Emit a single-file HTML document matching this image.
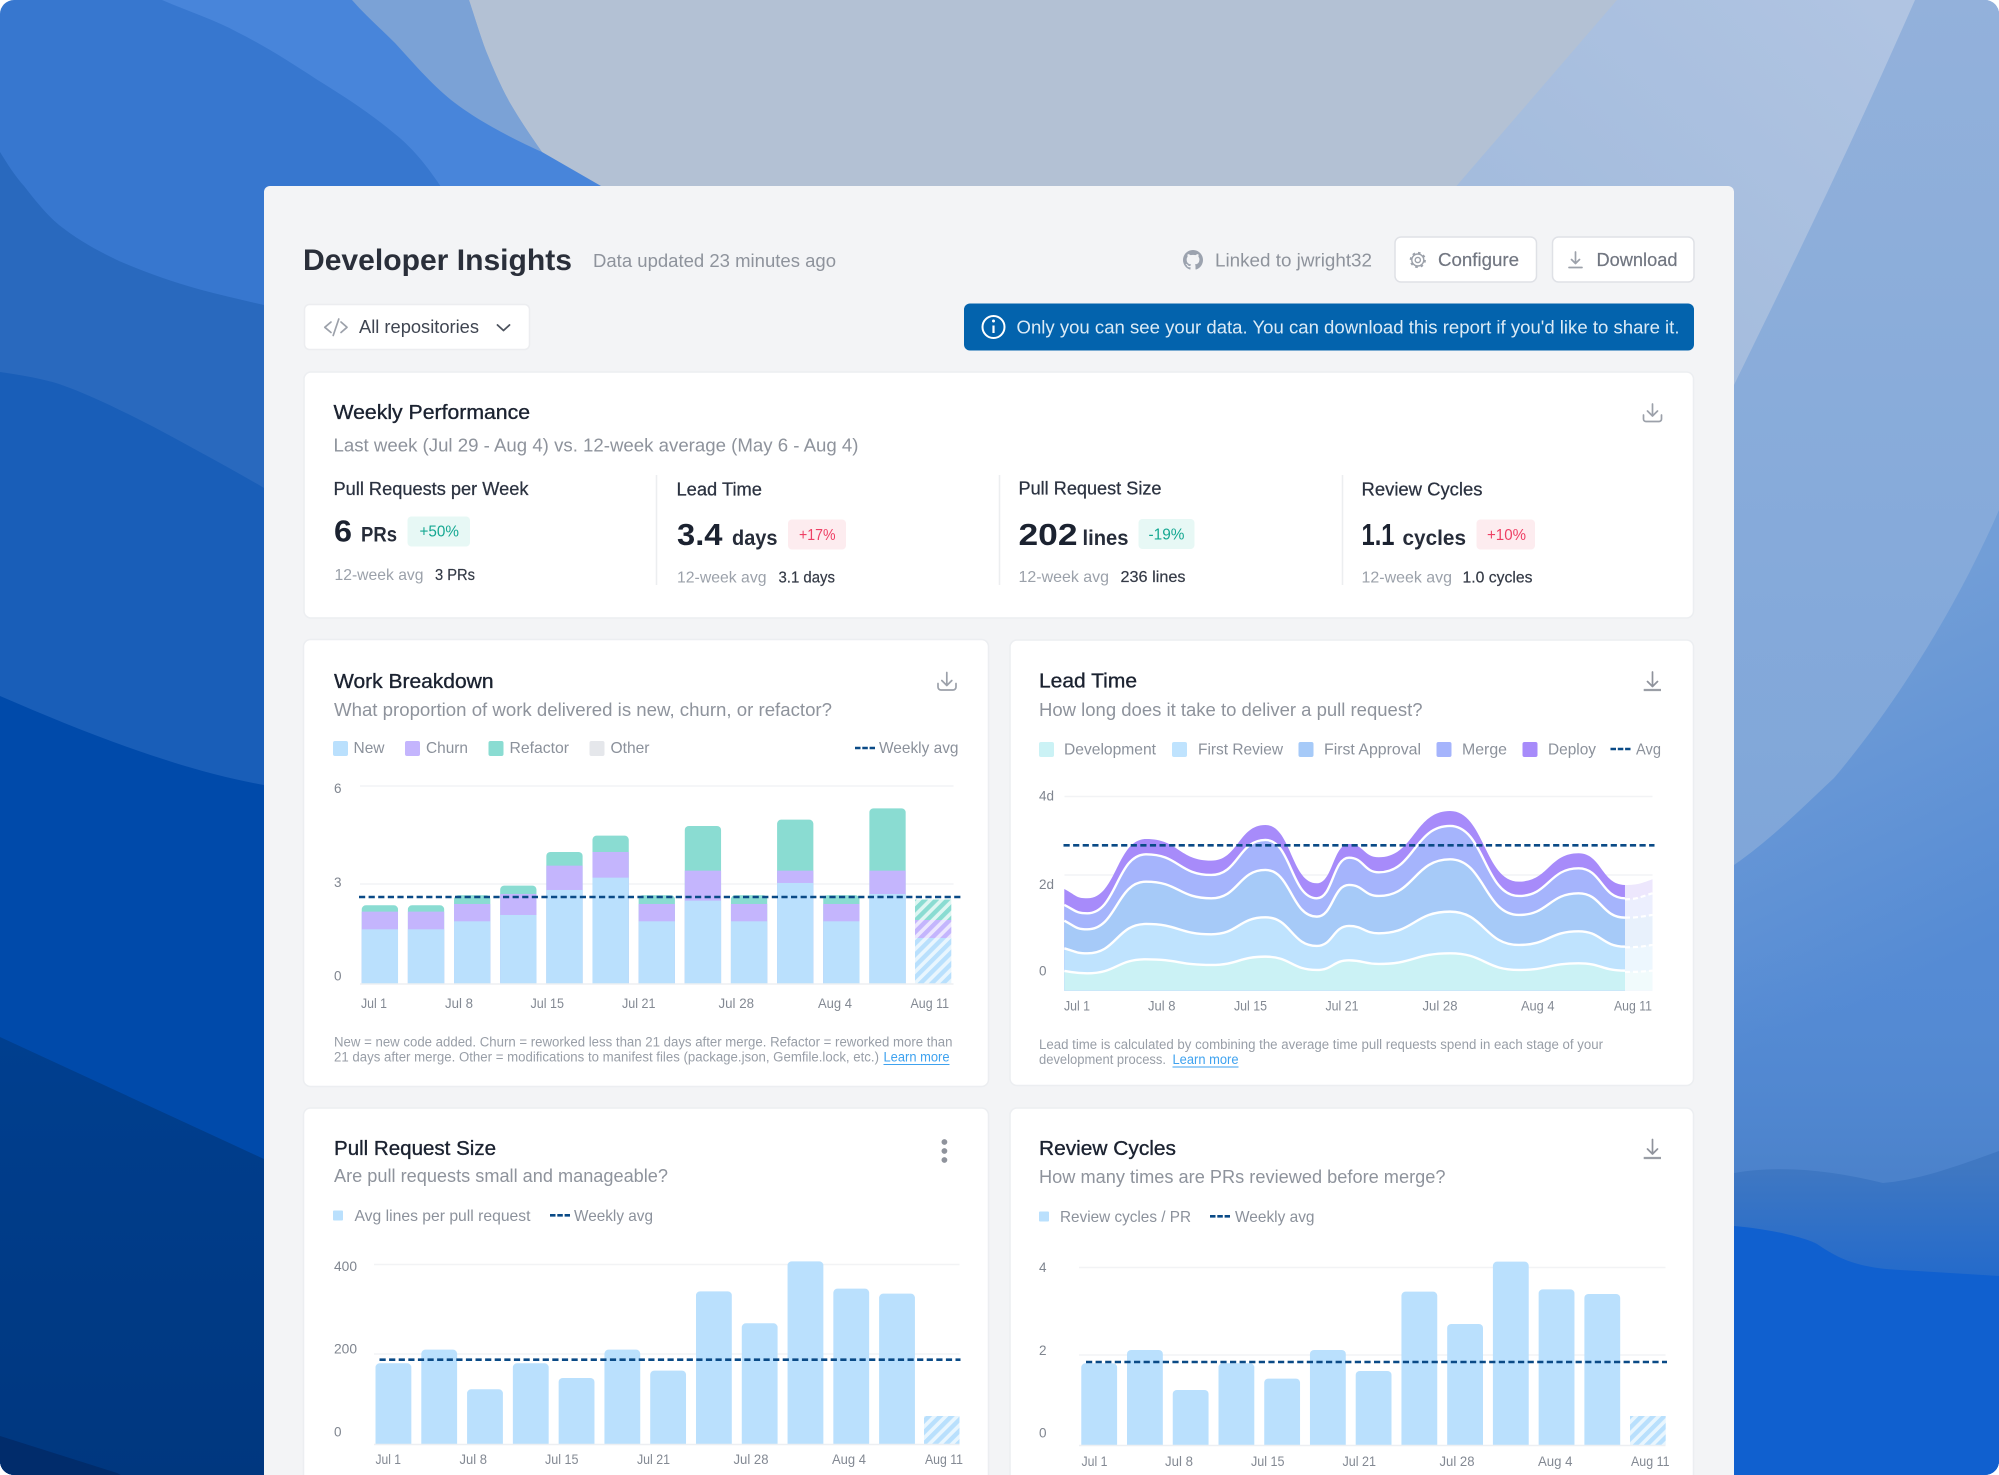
<!DOCTYPE html>
<html lang="en"><head><meta charset="utf-8"><title>Developer Insights</title>
<style>
html,body{margin:0;padding:0;background:#fff;width:1999px;height:1475px;overflow:hidden}
svg{display:block}
text{font-family:"Liberation Sans",sans-serif}
.h1{font-size:30px;font-weight:700;fill:#2a2f3a}
.h2{font-size:20.5px;fill:#1b2230;stroke:#1b2230;stroke-width:.35}
.sub{font-size:18px;fill:#8e939c}
.m{font-size:18px;fill:#2b3240;stroke:#2b3240;stroke-width:.25}
.big{font-size:31px;font-weight:700;fill:#1b2230}
.unit{font-size:21px;font-weight:700;fill:#262c39}
.avg{font-size:16px;fill:#9ba1aa}
.val{font-size:16px;fill:#343a46;stroke:#343a46;stroke-width:.2}
.lg{font-size:16px;fill:#8b919b}
.tk{font-size:13.5px;fill:#838993}
.ax{font-size:13.5px;fill:#7f858f}
.fn{font-size:13.5px;fill:#989ea7}
.lnk{font-size:13.5px;fill:#3ea2ef}
.btn{font-size:18px;fill:#717681;stroke:#717681;stroke-width:.2}
.ic{fill:none;stroke:#9ca1aa;stroke-width:1.7;stroke-linecap:round;stroke-linejoin:round}
.dash{fill:none;stroke:#0a4a86;stroke-width:2.6;stroke-dasharray:6.2 3.4}
.grid{stroke:#f2f3f5;stroke-width:1.5}
.axis{stroke:#edeff2;stroke-width:1.5}
.card{fill:#fff;stroke:#eceef1;stroke-width:1.5}
.w{fill:none;stroke:#fff;stroke-width:2.4;vector-effect:non-scaling-stroke}
.wd{fill:none;stroke:#fff;stroke-width:2.2;stroke-dasharray:5 3;vector-effect:non-scaling-stroke}
</style></head><body>
<svg xmlns="http://www.w3.org/2000/svg" width="1999" height="1475" viewBox="0 0 1999 1475">
<defs>
<clipPath id="round"><rect width="1999" height="1475" rx="14" ry="14"/></clipPath>
<clipPath id="c1"><rect x="0" y="0" width="1568" height="1091"/></clipPath>
<clipPath id="c3"><rect x="0" y="0" width="1568" height="1032"/></clipPath>
<clipPath id="c4"><rect x="0" y="0" width="1568" height="1035"/></clipPath>
<linearGradient id="rt" x1="0" y1="0" x2="0" y2="870" gradientUnits="userSpaceOnUse"><stop offset="0" stop-color="#93B1DB"/><stop offset=".45" stop-color="#89ACDA"/><stop offset="1" stop-color="#7FA6D9"/></linearGradient>
<linearGradient id="rb" x1="1800" y1="640" x2="1950" y2="960" gradientUnits="userSpaceOnUse"><stop offset="0" stop-color="#729ED7"/><stop offset="1" stop-color="#558BD4"/></linearGradient>
<linearGradient id="rb2" x1="0" y1="950" x2="0" y2="1175" gradientUnits="userSpaceOnUse"><stop offset="0" stop-color="#558BD4" stop-opacity="0"/><stop offset="1" stop-color="#4B82CB"/></linearGradient>
<linearGradient id="rl" x1="1880" y1="0" x2="1560" y2="380" gradientUnits="userSpaceOnUse"><stop offset="0" stop-color="#B0C4E2"/><stop offset="1" stop-color="#A1BADC"/></linearGradient>
<linearGradient id="rband" x1="0" y1="1165" x2="0" y2="1280" gradientUnits="userSpaceOnUse"><stop offset="0" stop-color="#4078C2"/><stop offset="1" stop-color="#236ACB"/></linearGradient>
<linearGradient id="ld" x1="0" y1="1040" x2="0" y2="1475" gradientUnits="userSpaceOnUse"><stop offset="0" stop-color="#003F8F"/><stop offset="1" stop-color="#00377F"/></linearGradient>
<pattern id="hb" width="8" height="8" patternUnits="userSpaceOnUse" patternTransform="rotate(45)"><rect width="8" height="8" fill="#e9f6fe"/><rect width="4.4" height="8" fill="#b9e0fd"/></pattern>
<pattern id="hp" width="8" height="8" patternUnits="userSpaceOnUse" patternTransform="rotate(45)"><rect width="8" height="8" fill="#ece7fe"/><rect width="4.4" height="8" fill="#c4b5fd"/></pattern>
<pattern id="ht" width="8" height="8" patternUnits="userSpaceOnUse" patternTransform="rotate(45)"><rect width="8" height="8" fill="#dff6f2"/><rect width="4.4" height="8" fill="#8adcd2"/></pattern>
</defs>

<!-- background -->
<g clip-path="url(#round)">
<rect width="1000" height="1480" fill="#3777CF"/>
<rect x="1000" width="999" height="1480" fill="url(#rb)"/>
<rect x="1000" y="950" width="999" height="530" fill="url(#rb2)"/>
<path d="M162 0C190 12 215 20 237 32C265 46 290 62 316 79C345 97 370 113 395 134C415 150 430 170 443 190L700 190L700 0Z" fill="#4885DA"/>
<path d="M352 0C365 15 380 28 395 43C415 65 435 88 455 103C480 122 515 140 542 152C530 135 520 120 510 103C500 85 493 68 486 51C480 35 474 15 469 0Z" fill="#7BA2D6"/>
<path d="M0 152C8 165 15 176 24 186C35 200 45 213 59 225C78 240 98 251 119 261C145 272 170 281 198 289C220 295 242 300 264 305V1480H0Z" fill="#2969BE"/>
<path d="M0 372C20 375 40 378 59 384C85 393 112 406 138 419C158 429 178 440 198 451C220 463 242 475 264 488V1480H0Z" fill="#195EB8"/>
<path d="M0 696C90 735 180 770 264 785V1480H0Z" fill="#004AAA"/>
<path d="M0 1037L264 1159V1480H0Z" fill="url(#ld)"/>
<path d="M0 1436L117 1473L130 1480H0Z" fill="#012C6B"/>
<path d="M1400 0H1999V510C1960 600 1900 700 1834 778C1800 810 1770 840 1734 865H1400Z" fill="url(#rt)"/>
<path d="M1400 0H1915C1840 170 1790 270 1733 387L1734 190H1400Z" fill="url(#rl)"/>
<path d="M469 0C474 15 480 35 486 51C493 68 500 85 510 103C520 120 530 135 542 152L601 186V190H1453L1617 0Z" fill="#B3C1D4"/>
<path d="M1734 1173C1780 1165 1830 1170 1883 1183C1920 1180 1960 1165 1999 1151V1480H1734Z" fill="url(#rband)"/>
<path d="M1734 1226C1780 1230 1810 1240 1817 1244C1840 1260 1860 1268 1900 1270L1999 1276V1480H1734Z" fill="#1060CF"/>
</g>

<!-- panel -->
<path d="M264 1480V192a6 6 0 0 1 6-6H1728a6 6 0 0 1 6 6V1480Z" fill="#F3F4F6"/>

<!-- header -->
<text class="h1" x="303" y="270" textLength="269" lengthAdjust="spacingAndGlyphs">Developer Insights</text>
<text class="sub" x="593" y="267" textLength="243" lengthAdjust="spacingAndGlyphs">Data updated 23 minutes ago</text>
<path transform="translate(1183 250) scale(1.25)" fill="#9ca3af" d="M8 0C3.58 0 0 3.58 0 8c0 3.54 2.29 6.53 5.47 7.59.4.07.55-.17.55-.38 0-.19-.01-.82-.01-1.49-2.01.37-2.53-.49-2.69-.94-.09-.23-.48-.94-.82-1.13-.28-.15-.68-.52-.01-.53.63-.01 1.08.58 1.23.82.72 1.21 1.87.87 2.33.66.07-.52.28-.87.51-1.07-1.78-.2-3.64-.89-3.64-3.95 0-.87.31-1.59.82-2.15-.08-.2-.36-1.02.08-2.12 0 0 .67-.21 2.2.82.64-.18 1.32-.27 2-.27.68 0 1.36.09 2 .27 1.53-1.04 2.2-.82 2.2-.82.44 1.1.16 1.92.08 2.12.51.56.82 1.27.82 2.15 0 3.07-1.87 3.75-3.65 3.95.29.25.54.73.54 1.48 0 1.07-.01 1.93-.01 2.2 0 .21.15.46.55.38A8.013 8.013 0 0016 8c0-4.42-3.58-8-8-8z"/>
<text class="sub" x="1215" y="266.5" textLength="157" lengthAdjust="spacingAndGlyphs">Linked to jwright32</text>
<rect x="1395" y="237" width="141.5" height="45" rx="6" fill="#fff" stroke="#dfe1e6" stroke-width="1.5"/>
<g class="ic" style="stroke-width:1.4"><circle cx="1417.8" cy="260" r="2.6"/><circle cx="1417.8" cy="260" r="6"/></g>
<circle cx="1417.8" cy="260" r="7.2" fill="none" stroke="#9ca1aa" stroke-width="1.8" stroke-dasharray="2.6 3.05"/>
<text class="btn" x="1438" y="266" textLength="81" lengthAdjust="spacingAndGlyphs">Configure</text>
<rect x="1552.5" y="237" width="141.5" height="45" rx="6" fill="#fff" stroke="#dfe1e6" stroke-width="1.5"/>
<path class="ic" d="M1575.5 252V263M1571.5 259.5L1575.5 263.5L1579.5 259.5M1569 267.5H1582"/>
<text class="btn" x="1596.5" y="266" textLength="81" lengthAdjust="spacingAndGlyphs">Download</text>

<rect x="304.5" y="304.5" width="225" height="45" rx="5" fill="#fff" stroke="#ecedf0" stroke-width="1.5"/>
<path class="ic" d="M331 322L324.8 327.3L331 332.5M341 322L347 327.3L341 332.5M338.8 319L333.2 335.5"/>
<text x="359" y="333" font-size="18" fill="#3f4551" textLength="120" lengthAdjust="spacingAndGlyphs">All repositories</text>
<path d="M497.5 325L503.5 330.5L509.5 325" fill="none" stroke="#4d535e" stroke-width="1.8" stroke-linecap="round" stroke-linejoin="round"/>

<rect x="964" y="303.5" width="730" height="47" rx="6" fill="#0363AD"/>
<circle cx="993.5" cy="327" r="11" fill="none" stroke="#fff" stroke-width="2"/>
<circle cx="993.5" cy="321" r="1.5" fill="#fff"/>
<path d="M993.5 325.5V333" stroke="#fff" stroke-width="2.2"/>
<text x="1016.5" y="333.5" font-size="18" fill="#dcebf6" textLength="663" lengthAdjust="spacingAndGlyphs">Only you can see your data. You can download this report if you'd like to share it.</text>

<!-- weekly performance -->
<rect class="card" x="304" y="372" width="1389.5" height="246" rx="7"/>
<text class="h2" x="333.5" y="419" textLength="196.5" lengthAdjust="spacingAndGlyphs">Weekly Performance</text>
<text class="sub" x="333.5" y="451.5" textLength="525" lengthAdjust="spacingAndGlyphs">Last week (Jul 29 - Aug 4) vs. 12-week average (May 6 - Aug 4)</text>
<path class="ic" d="M1652.5 404V415.5M1647.5 411L1652.5 416L1657.5 411M1643.5 415V419a2.5 2.5 0 0 0 2.5 2.5H1659a2.5 2.5 0 0 0 2.5-2.5V415"/>

<text class="m" x="333.5" y="495" textLength="195" lengthAdjust="spacingAndGlyphs">Pull Requests per Week</text>
<text class="big" x="334" y="541.5" textLength="18" lengthAdjust="spacingAndGlyphs">6</text>
<text class="unit" x="361" y="541.5" textLength="36" lengthAdjust="spacingAndGlyphs">PRs</text>
<rect x="407.5" y="516.5" width="62.5" height="30" rx="4" fill="#E7F8F5"/>
<text x="419.5" y="536.5" font-size="16" fill="#15a892" textLength="39.5" lengthAdjust="spacingAndGlyphs">+50%</text>
<text class="avg" x="334.5" y="580" textLength="89" lengthAdjust="spacingAndGlyphs">12-week avg</text>
<text class="val" x="435" y="580" textLength="40" lengthAdjust="spacingAndGlyphs">3 PRs</text>
<path d="M656.5 475V585M999.5 475V585M1342.5 475V585" stroke="#eceef0" stroke-width="1.5"/>

<text class="m" x="676.5" y="495.5" textLength="85.5" lengthAdjust="spacingAndGlyphs">Lead Time</text>
<text class="big" x="677" y="545" textLength="45.5" lengthAdjust="spacingAndGlyphs">3.4</text>
<text class="unit" x="732" y="545" textLength="45.5" lengthAdjust="spacingAndGlyphs">days</text>
<rect x="788" y="519.5" width="58" height="30" rx="4" fill="#FDECEF"/>
<text x="799" y="540" font-size="16" fill="#ee3f64" textLength="36.5" lengthAdjust="spacingAndGlyphs">+17%</text>
<text class="avg" x="677" y="582.5" textLength="89.5" lengthAdjust="spacingAndGlyphs">12-week avg</text>
<text class="val" x="778.5" y="582.5" textLength="56.5" lengthAdjust="spacingAndGlyphs">3.1 days</text>

<text class="m" x="1018.5" y="494.5" textLength="143" lengthAdjust="spacingAndGlyphs">Pull Request Size</text>
<text class="big" x="1018.5" y="545" textLength="59" lengthAdjust="spacingAndGlyphs">202</text>
<text class="unit" x="1082.5" y="545" textLength="46" lengthAdjust="spacingAndGlyphs">lines</text>
<rect x="1138.5" y="519" width="56" height="30" rx="4" fill="#E7F8F5"/>
<text x="1148.5" y="539.5" font-size="16" fill="#15a892" textLength="36" lengthAdjust="spacingAndGlyphs">-19%</text>
<text class="avg" x="1018.5" y="582" textLength="90.5" lengthAdjust="spacingAndGlyphs">12-week avg</text>
<text class="val" x="1120.5" y="582" textLength="65" lengthAdjust="spacingAndGlyphs">236 lines</text>

<text class="m" x="1361.5" y="495.5" textLength="121" lengthAdjust="spacingAndGlyphs">Review Cycles</text>
<text class="big" x="1361.5" y="545" textLength="33" lengthAdjust="spacingAndGlyphs">1.1</text>
<text class="unit" x="1402.5" y="545" textLength="63.5" lengthAdjust="spacingAndGlyphs">cycles</text>
<rect x="1476.5" y="519.5" width="58.5" height="30" rx="4" fill="#FDECEF"/>
<text x="1487" y="540" font-size="16" fill="#ee3f64" textLength="39" lengthAdjust="spacingAndGlyphs">+10%</text>
<text class="avg" x="1361.5" y="582.5" textLength="90.5" lengthAdjust="spacingAndGlyphs">12-week avg</text>
<text class="val" x="1462.5" y="582.5" textLength="70" lengthAdjust="spacingAndGlyphs">1.0 cycles</text>

<!-- work breakdown -->
<rect class="card" x="303.5" y="639.5" width="685" height="447" rx="7"/>
<text class="h2" x="334" y="688" textLength="159.5" lengthAdjust="spacingAndGlyphs">Work Breakdown</text>
<text class="sub" x="334" y="716" textLength="498" lengthAdjust="spacingAndGlyphs">What proportion of work delivered is new, churn, or refactor?</text>
<path class="ic" d="M946.8 672.5V685M941.8 680.5L946.8 685.5L951.8 680.5M938 683.5V687a3 3 0 0 0 3 3H953a3 3 0 0 0 3-3V683.5"/>
<rect x="333" y="741" width="15" height="15" rx="2" fill="#BAE0FD"/><text class="lg" x="353.5" y="753" textLength="31" lengthAdjust="spacingAndGlyphs">New</text>
<rect x="405" y="741" width="15" height="15" rx="2" fill="#C4B5FD"/><text class="lg" x="426" y="753" textLength="42" lengthAdjust="spacingAndGlyphs">Churn</text>
<rect x="488.5" y="741" width="15" height="15" rx="2" fill="#8ADCD2"/><text class="lg" x="509.5" y="753" textLength="59.5" lengthAdjust="spacingAndGlyphs">Refactor</text>
<rect x="589.5" y="741" width="15" height="15" rx="2" fill="#E5E7EB"/><text class="lg" x="610.5" y="753" textLength="39" lengthAdjust="spacingAndGlyphs">Other</text>
<path class="dash" d="M855 748H875" style="stroke-dasharray:5.5 1.8"/>
<text class="lg" x="879" y="753" textLength="79.5" lengthAdjust="spacingAndGlyphs">Weekly avg</text>
<path class="grid" d="M360 786H953.5M360 884H953.5"/>
<text class="ax" x="334" y="793">6</text><text class="ax" x="334" y="887">3</text><text class="ax" x="334" y="980.5">0</text>
<g transform="translate(280 620) scale(.4592 .3333)" clip-path="url(#c1)">
<g fill="#8ADCD2">
<rect x="178" y="856" width="79" height="300" rx="9" ry="12"/><rect x="278.5" y="856" width="79" height="300" rx="9" ry="12"/><rect x="379" y="826" width="79" height="300" rx="9" ry="12"/><rect x="479.5" y="797" width="79" height="300" rx="9" ry="12"/><rect x="580" y="696" width="79" height="500" rx="9" ry="12"/><rect x="680.5" y="647" width="79" height="500" rx="9" ry="12"/><rect x="781" y="826" width="79" height="300" rx="9" ry="12"/><rect x="881.5" y="618" width="79" height="500" rx="9" ry="12"/><rect x="982" y="826" width="79" height="300" rx="9" ry="12"/><rect x="1082.5" y="599" width="79" height="520" rx="9" ry="12"/><rect x="1183" y="826" width="79" height="300" rx="9" ry="12"/><rect x="1283.5" y="565" width="79" height="540" rx="9" ry="12"/>
</g>
<g fill="#C4B5FD">
<rect x="178" y="875" width="79" height="220"/><rect x="278.5" y="875" width="79" height="220"/><rect x="379" y="852" width="79" height="240"/><rect x="479.5" y="822" width="79" height="270"/><rect x="580" y="737" width="79" height="360"/><rect x="680.5" y="696" width="79" height="400"/><rect x="781" y="852" width="79" height="240"/><rect x="881.5" y="752" width="79" height="340"/><rect x="982" y="852" width="79" height="240"/><rect x="1082.5" y="752" width="79" height="340"/><rect x="1183" y="852" width="79" height="240"/><rect x="1283.5" y="752" width="79" height="340"/>
</g>
<g fill="#BAE0FD">
<rect x="178" y="928" width="79" height="165"/><rect x="278.5" y="928" width="79" height="165"/><rect x="379" y="904" width="79" height="190"/><rect x="479.5" y="885" width="79" height="210"/><rect x="580" y="810" width="79" height="285"/><rect x="680.5" y="773" width="79" height="320"/><rect x="781" y="904" width="79" height="190"/><rect x="881.5" y="842" width="79" height="250"/><rect x="982" y="904" width="79" height="190"/><rect x="1082.5" y="789" width="79" height="305"/><rect x="1183" y="904" width="79" height="190"/><rect x="1283.5" y="822" width="79" height="270"/>
</g>
</g>
<rect x="915" y="899.5" width="36.3" height="20.5" fill="url(#ht)"/>
<rect x="915" y="920" width="36.3" height="18" fill="url(#hp)"/>
<rect x="915" y="938" width="36.3" height="46" fill="url(#hb)"/>
<path class="axis" d="M360 984H953.5"/>
<path class="dash" d="M359 897H960.5"/>
<g class="tk">
<text x="361" y="1008" textLength="26" lengthAdjust="spacingAndGlyphs">Jul 1</text><text x="445" y="1008" textLength="28" lengthAdjust="spacingAndGlyphs">Jul 8</text><text x="530.5" y="1008" textLength="33.5" lengthAdjust="spacingAndGlyphs">Jul 15</text><text x="622" y="1008" textLength="33.5" lengthAdjust="spacingAndGlyphs">Jul 21</text><text x="718.5" y="1008" textLength="35.5" lengthAdjust="spacingAndGlyphs">Jul 28</text><text x="818" y="1008" textLength="34" lengthAdjust="spacingAndGlyphs">Aug 4</text><text x="910.5" y="1008" textLength="38.5" lengthAdjust="spacingAndGlyphs">Aug 11</text>
</g>
<text class="fn" x="334" y="1046.5" textLength="618.5" lengthAdjust="spacingAndGlyphs">New = new code added. Churn = reworked less than 21 days after merge. Refactor = reworked more than</text>
<text class="fn" x="334" y="1061.5" textLength="545" lengthAdjust="spacingAndGlyphs">21 days after merge. Other = modifications to manifest files (package.json, Gemfile.lock, etc.)</text>
<text class="lnk" x="883.5" y="1061.5" textLength="66" lengthAdjust="spacingAndGlyphs">Learn more</text>
<path d="M883.5 1064.5H949.5" stroke="#3ea2ef" stroke-width="1"/>

<!-- lead time -->
<rect class="card" x="1010" y="640" width="683.5" height="445.5" rx="7"/>
<text class="h2" x="1039" y="687.5" textLength="98" lengthAdjust="spacingAndGlyphs">Lead Time</text>
<text class="sub" x="1039" y="716" textLength="383.5" lengthAdjust="spacingAndGlyphs">How long does it take to deliver a pull request?</text>
<path class="ic" d="M1652.5 672V686.5M1647.5 681.5L1652.5 686.5L1657.5 681.5" style="stroke:#8f939c"/>
<path d="M1643.7 690H1661" stroke="#9a9ea6" stroke-width="2.2"/>
<rect x="1039" y="742" width="15" height="15" rx="2" fill="#CBF2F5"/><text class="lg" x="1064" y="754.5" textLength="92" lengthAdjust="spacingAndGlyphs">Development</text>
<rect x="1172" y="742" width="15" height="15" rx="2" fill="#BFE3FE"/><text class="lg" x="1198" y="754.5" textLength="85" lengthAdjust="spacingAndGlyphs">First Review</text>
<rect x="1298.5" y="742" width="15" height="15" rx="2" fill="#A6CAF8"/><text class="lg" x="1324" y="754.5" textLength="97" lengthAdjust="spacingAndGlyphs">First Approval</text>
<rect x="1436.5" y="742" width="15" height="15" rx="2" fill="#A5B4FC"/><text class="lg" x="1462" y="754.5" textLength="45" lengthAdjust="spacingAndGlyphs">Merge</text>
<rect x="1522.5" y="742" width="15" height="15" rx="2" fill="#A78BFA"/><text class="lg" x="1548" y="754.5" textLength="48" lengthAdjust="spacingAndGlyphs">Deploy</text>
<path class="dash" d="M1610.5 749H1630.5" style="stroke-dasharray:5.5 1.8"/>
<text class="lg" x="1636" y="754.5" textLength="25" lengthAdjust="spacingAndGlyphs">Avg</text>
<path class="grid" d="M1064.5 796.5H1652.5M1064.5 875H1652.5"/>
<text class="ax" x="1039" y="800.5" textLength="15" lengthAdjust="spacingAndGlyphs">4d</text><text class="ax" x="1039" y="889" textLength="15" lengthAdjust="spacingAndGlyphs">2d</text><text class="ax" x="1039" y="975.5">0</text>
<g transform="translate(1000 620) scale(.4592 .3333)">
<path fill="#EDE7FD" d="M1361 795C1390 795 1395 790 1421 778V1112H1361Z"/>
<path fill="#ECEFFE" d="M1361 838C1390 838 1395 830 1421 820V1112H1361Z"/>
<path fill="#E8F1FC" d="M1361 893C1390 893 1395 890 1421 885V1112H1361Z"/>
<path fill="#EDF7FE" d="M1361 982C1390 982 1395 980 1421 975V1112H1361Z"/>
<path fill="#F1FBFC" d="M1361 1056C1390 1056 1395 1055 1421 1052V1112H1361Z"/>
<path class="wd" d="M1361 838C1390 838 1395 830 1421 820M1361 893C1390 893 1395 890 1421 885M1361 982C1390 982 1395 980 1421 975M1361 1056C1390 1056 1395 1055 1421 1052"/>
<path fill="#A78BFA" d="M140 807C165 825 165 835 190 835C254 835 254 657 318 657C389 657 389 722 460 722C519 722 519 615 578 615C634 615 634 790 690 790C725 790 725 672 760 672C792 672 792 712 825 712C902 712 902 573 980 573C1055 573 1055 785 1130 785C1195 785 1195 700 1260 700C1310 700 1310 795 1361 795V1112H140Z"/>
<path fill="#A5B4FC" d="M140 855C165 872 165 880 190 880C254 880 254 703 318 703C389 703 389 765 460 765C519 765 519 660 578 660C634 660 634 835 690 835C725 835 725 713 760 713C792 713 792 757 825 757C902 757 902 618 980 618C1055 618 1055 828 1130 828C1195 828 1195 745 1260 745C1310 745 1310 835 1361 835V1112H140Z"/>
<path fill="#A6CAF8" d="M140 902C165 920 165 928 190 928C254 928 254 785 318 785C389 785 389 835 460 835C519 835 519 750 578 750C634 750 634 890 690 890C725 890 725 795 760 795C792 795 792 828 825 828C902 828 902 718 980 718C1055 718 1055 885 1130 885C1195 885 1195 820 1260 820C1310 820 1310 893 1361 893V1112H140Z"/>
<path fill="#BFE3FE" d="M140 985C165 995 165 1000 190 1000C254 1000 254 912 318 912C389 912 389 943 460 943C519 943 519 892 578 892C634 892 634 978 690 978C725 978 725 918 760 918C792 918 792 940 825 940C902 940 902 875 980 875C1055 875 1055 975 1130 975C1195 975 1195 934 1260 934C1310 934 1310 980 1361 980V1112H140Z"/>
<path fill="#CBF2F5" d="M140 1053C165 1058 165 1060 190 1060C254 1060 254 1018 318 1018C389 1018 389 1035 460 1035C519 1035 519 1010 578 1010C634 1010 634 1050 690 1050C725 1050 725 1021 760 1021C792 1021 792 1032 825 1032C902 1032 902 1000 980 1000C1055 1000 1055 1050 1130 1050C1195 1050 1195 1030 1260 1030C1310 1030 1310 1052 1361 1052V1112H140Z"/>
<path class="w" d="M140 855C165 872 165 880 190 880C254 880 254 703 318 703C389 703 389 765 460 765C519 765 519 660 578 660C634 660 634 835 690 835C725 835 725 713 760 713C792 713 792 757 825 757C902 757 902 618 980 618C1055 618 1055 828 1130 828C1195 828 1195 745 1260 745C1310 745 1310 835 1361 835"/>
<path class="w" d="M140 902C165 920 165 928 190 928C254 928 254 785 318 785C389 785 389 835 460 835C519 835 519 750 578 750C634 750 634 890 690 890C725 890 725 795 760 795C792 795 792 828 825 828C902 828 902 718 980 718C1055 718 1055 885 1130 885C1195 885 1195 820 1260 820C1310 820 1310 893 1361 893"/>
<path class="w" d="M140 985C165 995 165 1000 190 1000C254 1000 254 912 318 912C389 912 389 943 460 943C519 943 519 892 578 892C634 892 634 978 690 978C725 978 725 918 760 918C792 918 792 940 825 940C902 940 902 875 980 875C1055 875 1055 975 1130 975C1195 975 1195 934 1260 934C1310 934 1310 980 1361 980"/>
<path class="w" d="M140 1053C165 1058 165 1060 190 1060C254 1060 254 1018 318 1018C389 1018 389 1035 460 1035C519 1035 519 1010 578 1010C634 1010 634 1050 690 1050C725 1050 725 1021 760 1021C792 1021 792 1032 825 1032C902 1032 902 1000 980 1000C1055 1000 1055 1050 1130 1050C1195 1050 1195 1030 1260 1030C1310 1030 1310 1052 1361 1052"/>
</g>
<path class="dash" d="M1063.5 845.3H1654.5"/>
<g class="tk">
<text x="1064" y="1010.5" textLength="26" lengthAdjust="spacingAndGlyphs">Jul 1</text><text x="1148" y="1010.5" textLength="27.5" lengthAdjust="spacingAndGlyphs">Jul 8</text><text x="1234" y="1010.5" textLength="33" lengthAdjust="spacingAndGlyphs">Jul 15</text><text x="1325.5" y="1010.5" textLength="33" lengthAdjust="spacingAndGlyphs">Jul 21</text><text x="1422.5" y="1010.5" textLength="35" lengthAdjust="spacingAndGlyphs">Jul 28</text><text x="1521" y="1010.5" textLength="33.5" lengthAdjust="spacingAndGlyphs">Aug 4</text><text x="1614" y="1010.5" textLength="38" lengthAdjust="spacingAndGlyphs">Aug 11</text>
</g>
<text class="fn" x="1039" y="1049" textLength="564" lengthAdjust="spacingAndGlyphs">Lead time is calculated by combining the average time pull requests spend in each stage of your</text>
<text class="fn" x="1039" y="1064" textLength="127" lengthAdjust="spacingAndGlyphs">development process.</text>
<text class="lnk" x="1172.5" y="1064" textLength="66" lengthAdjust="spacingAndGlyphs">Learn more</text>
<path d="M1172.5 1067H1238.5" stroke="#3ea2ef" stroke-width="1"/>

<!-- pull request size -->
<path class="card" d="M303.5 1480V1115a7 7 0 0 1 7-7H981.5a7 7 0 0 1 7 7V1480"/>
<text class="h2" x="334" y="1155" textLength="162" lengthAdjust="spacingAndGlyphs">Pull Request Size</text>
<text class="sub" x="334" y="1182" textLength="334" lengthAdjust="spacingAndGlyphs">Are pull requests small and manageable?</text>
<circle cx="944.4" cy="1142" r="2.9" fill="#8f939c"/><circle cx="944.4" cy="1151" r="2.9" fill="#8f939c"/><circle cx="944.4" cy="1160" r="2.9" fill="#8f939c"/>
<rect x="333" y="1210.5" width="10" height="10" rx="1" fill="#BAE0FD"/>
<text class="lg" x="354.5" y="1221" textLength="176" lengthAdjust="spacingAndGlyphs">Avg lines per pull request</text>
<path class="dash" d="M550 1215.3H570" style="stroke-dasharray:5.5 1.8"/>
<text class="lg" x="574" y="1221" textLength="79" lengthAdjust="spacingAndGlyphs">Weekly avg</text>
<path class="grid" d="M374 1264.5H959.5M374 1354H959.5"/>
<text class="ax" x="334" y="1271" textLength="23" lengthAdjust="spacingAndGlyphs">400</text><text class="ax" x="334" y="1353.5" textLength="23" lengthAdjust="spacingAndGlyphs">200</text><text class="ax" x="334" y="1436.5">0</text>
<g transform="translate(280 1100) scale(.4592 .3333)" clip-path="url(#c3)" fill="#BAE0FD">
<rect x="208" y="790" width="78" height="300" rx="9" ry="12"/><rect x="307.7" y="749" width="78" height="340" rx="9" ry="12"/><rect x="407.4" y="868" width="78" height="220" rx="9" ry="12"/><rect x="507.1" y="790" width="78" height="300" rx="9" ry="12"/><rect x="606.8" y="834" width="78" height="250" rx="9" ry="12"/><rect x="706.5" y="749" width="78" height="340" rx="9" ry="12"/><rect x="806.2" y="812" width="78" height="280" rx="9" ry="12"/><rect x="905.9" y="574" width="78" height="500" rx="9" ry="12"/><rect x="1005.6" y="670" width="78" height="400" rx="9" ry="12"/><rect x="1105.3" y="484" width="78" height="600" rx="9" ry="12"/><rect x="1205" y="566" width="78" height="500" rx="9" ry="12"/><rect x="1304.7" y="581" width="78" height="500" rx="9" ry="12"/>
</g>
<rect x="924" y="1416" width="35.5" height="28" fill="url(#hb)"/>
<path class="axis" d="M374 1444.5H959.5"/>
<path class="dash" d="M379.5 1359.7H960.5"/>
<g class="tk">
<text x="375.5" y="1464" textLength="25.5" lengthAdjust="spacingAndGlyphs">Jul 1</text><text x="459.5" y="1464" textLength="27.5" lengthAdjust="spacingAndGlyphs">Jul 8</text><text x="545" y="1464" textLength="33.5" lengthAdjust="spacingAndGlyphs">Jul 15</text><text x="637" y="1464" textLength="33" lengthAdjust="spacingAndGlyphs">Jul 21</text><text x="733.5" y="1464" textLength="35" lengthAdjust="spacingAndGlyphs">Jul 28</text><text x="832" y="1464" textLength="34" lengthAdjust="spacingAndGlyphs">Aug 4</text><text x="925" y="1464" textLength="38" lengthAdjust="spacingAndGlyphs">Aug 11</text>
</g>

<!-- review cycles -->
<path class="card" d="M1010 1480V1115a7 7 0 0 1 7-7H1686.5a7 7 0 0 1 7 7V1480"/>
<text class="h2" x="1039" y="1155" textLength="137" lengthAdjust="spacingAndGlyphs">Review Cycles</text>
<text class="sub" x="1039" y="1183" textLength="406.5" lengthAdjust="spacingAndGlyphs">How many times are PRs reviewed before merge?</text>
<path class="ic" d="M1652.5 1139.5V1154M1647.5 1149L1652.5 1154L1657.5 1149" style="stroke:#8f939c"/>
<path d="M1643.7 1158H1661" stroke="#9a9ea6" stroke-width="2.2"/>
<rect x="1039" y="1211.5" width="10" height="10" rx="1" fill="#BAE0FD"/>
<text class="lg" x="1060" y="1222" textLength="131" lengthAdjust="spacingAndGlyphs">Review cycles / PR</text>
<path class="dash" d="M1210 1216.3H1230" style="stroke-dasharray:5.5 1.8"/>
<text class="lg" x="1235" y="1222" textLength="79.5" lengthAdjust="spacingAndGlyphs">Weekly avg</text>
<path class="grid" d="M1079 1267.5H1665.5M1079 1355H1665.5"/>
<text class="ax" x="1039" y="1272">4</text><text class="ax" x="1039" y="1355">2</text><text class="ax" x="1039" y="1437.5">0</text>
<g transform="translate(1000 1100) scale(.4592 .3333)" clip-path="url(#c4)" fill="#BAE0FD">
<rect x="177" y="790" width="78" height="300" rx="9" ry="12"/><rect x="276.6" y="750" width="78" height="340" rx="9" ry="12"/><rect x="376.2" y="870" width="78" height="220" rx="9" ry="12"/><rect x="475.8" y="790" width="78" height="300" rx="9" ry="12"/><rect x="575.4" y="836" width="78" height="250" rx="9" ry="12"/><rect x="675" y="750" width="78" height="340" rx="9" ry="12"/><rect x="774.6" y="813" width="78" height="280" rx="9" ry="12"/><rect x="874.2" y="575" width="78" height="500" rx="9" ry="12"/><rect x="973.8" y="672" width="78" height="400" rx="9" ry="12"/><rect x="1073.4" y="485" width="78" height="600" rx="9" ry="12"/><rect x="1173" y="568" width="78" height="500" rx="9" ry="12"/><rect x="1272.6" y="582" width="78" height="500" rx="9" ry="12"/>
</g>
<rect x="1630" y="1416" width="35.7" height="29" fill="url(#hb)"/>
<path class="axis" d="M1079 1445.5H1665.5"/>
<path class="dash" d="M1086 1362H1667"/>
<g class="tk">
<text x="1081.5" y="1466" textLength="26" lengthAdjust="spacingAndGlyphs">Jul 1</text><text x="1165" y="1466" textLength="28" lengthAdjust="spacingAndGlyphs">Jul 8</text><text x="1251" y="1466" textLength="33.5" lengthAdjust="spacingAndGlyphs">Jul 15</text><text x="1342.5" y="1466" textLength="33.5" lengthAdjust="spacingAndGlyphs">Jul 21</text><text x="1439.5" y="1466" textLength="35" lengthAdjust="spacingAndGlyphs">Jul 28</text><text x="1538" y="1466" textLength="34.5" lengthAdjust="spacingAndGlyphs">Aug 4</text><text x="1631" y="1466" textLength="38.5" lengthAdjust="spacingAndGlyphs">Aug 11</text>
</g>
</svg>
</body></html>
